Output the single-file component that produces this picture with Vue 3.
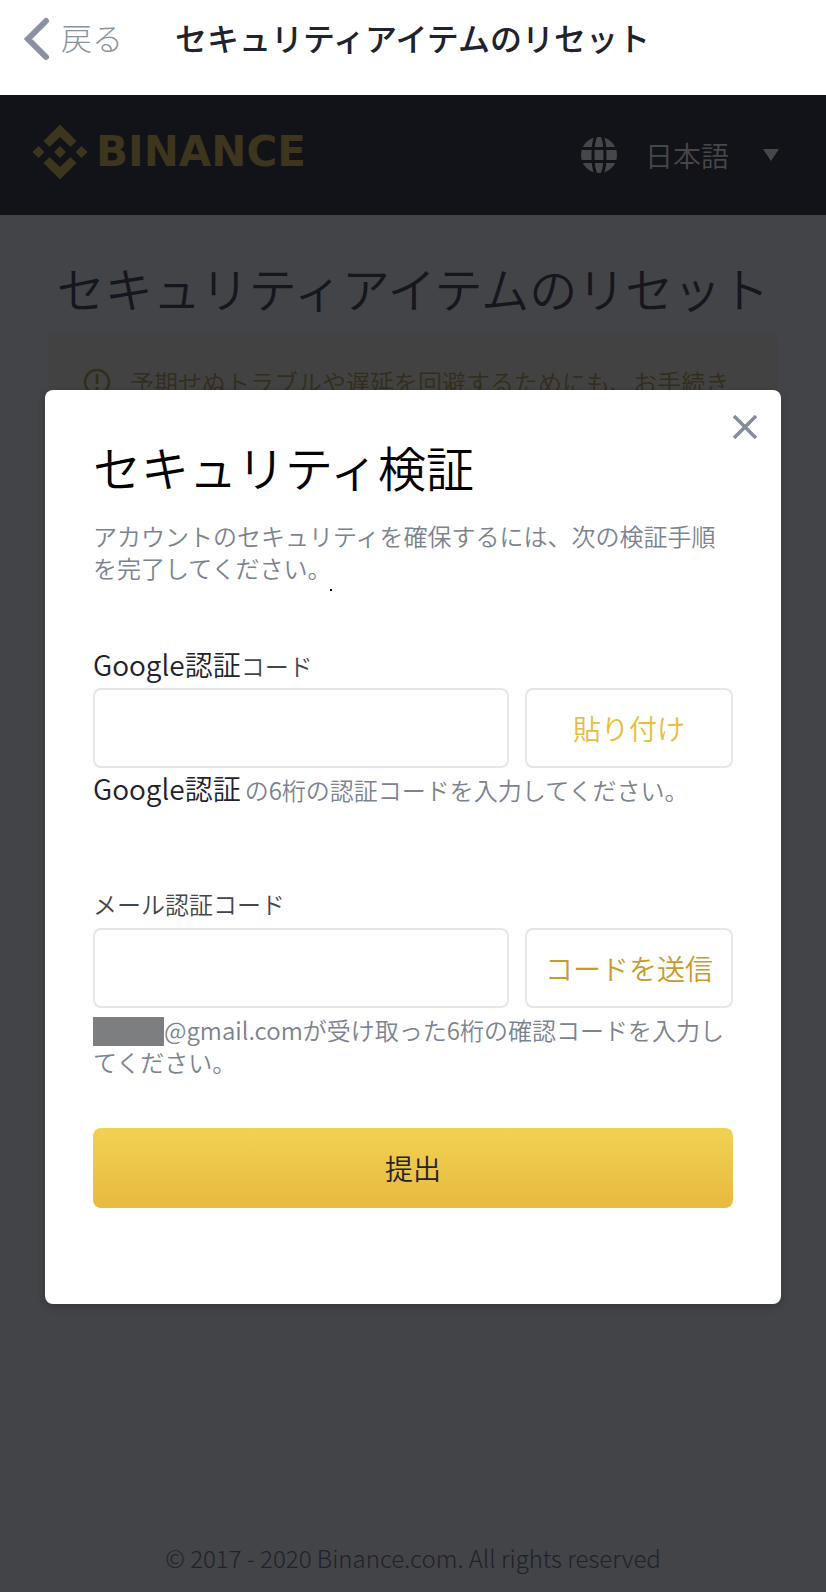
<script setup>
import { ref } from 'vue'

const googleCode = ref('')
const mailCode = ref('')
const title = 'セキュリティアイテムのリセット'
</script>

<template>
  <div class="app">
    <header class="topbar">
      <button class="back" type="button">
        <svg width="26" height="48" viewBox="0 0 26 48" fill="none" aria-hidden="true">
          <path d="M22 8L4 26L22 44" stroke="#8b91a0" stroke-width="6" stroke-linecap="round" stroke-linejoin="miter" />
        </svg>
        <span>戻る</span>
      </button>
      <div class="topbar-title">{{ title }}</div>
    </header>

    <div class="page">
      <nav class="site-nav">
        <a class="brand" href="#">
          <svg width="56" height="56" viewBox="0 0 56 56" fill="#3d351e" aria-hidden="true">
            <path d="M28 .5L44.500 17L38.500 23L28 13L17.500 23L11.500 17Z" />
            <path d="M28 55.500L44.500 39L38.500 33L28 43L17.500 33L11.500 39Z" />
            <path d="M28 22L34 28L28 34L22 28Z" />
            <path d="M6.500 22L12.500 28L6.500 34L.5 28Z" />
            <path d="M49.500 22L55.500 28L49.500 34L43.500 28Z" />
          </svg>
          <span>BINANCE</span>
        </a>
        <button class="lang" type="button">
          <svg width="36" height="36" viewBox="0 0 36 36" aria-hidden="true">
            <circle cx="18" cy="18" r="18" fill="#46474b" />
            <g fill="none" stroke="#121318" stroke-width="3">
              <path d="M0 11.500H36M0 24.500H36" />
              <path d="M15 -1C11 6 11 30 15 37M21 -1C25 6 25 30 21 37" />
            </g>
          </svg>
          <span>日本語</span>
          <svg width="16" height="12" viewBox="0 0 16 12" fill="#46474b" aria-hidden="true">
            <path d="M0 0H16L8 12Z" />
          </svg>
        </button>
      </nav>

      <main class="content">
        <h1>{{ title }}</h1>
        <div class="notice">
          <svg width="28" height="28" viewBox="0 0 28 28" fill="none" stroke="#332d1c" stroke-width="2.500" aria-hidden="true">
            <circle cx="14" cy="14" r="12" />
            <path d="M14 6V16M14 19V22" />
          </svg>
          <span>予期せぬトラブルや遅延を回避するためにも、お手続き</span>
        </div>
      </main>

      <footer>© 2017 - 2020 Binance.com. All rights reserved</footer>

      <section class="modal" role="dialog" aria-labelledby="modal-title">
        <button class="close" type="button" aria-label="閉じる">
          <svg width="24" height="24" viewBox="0 0 24 24" fill="none" stroke="#868c9a" stroke-width="3.500" aria-hidden="true">
            <path d="M1 1L23 23M23 1L1 23" />
          </svg>
        </button>
        <h2 id="modal-title">セキュリティ検証</h2>
        <p class="intro">アカウントのセキュリティを確保するには、次の検証手順を完了してください。</p>
        <div class="speck"></div>

        <form @submit.prevent>
          <label class="label" for="google-code"><strong>Google認証</strong>コード</label>
          <div class="row">
            <input id="google-code" v-model="googleCode" type="text" inputmode="numeric" />
            <button class="side paste" type="button">貼り付け</button>
          </div>
          <p class="hint hint-google"><strong>Google認証</strong>の6桁の認証コードを入力してください。</p>

          <label class="label" for="mail-code">メール認証コード</label>
          <div class="row">
            <input id="mail-code" v-model="mailCode" type="text" inputmode="numeric" />
            <button class="side send" type="button">コードを送信</button>
          </div>
          <p class="hint hint-mail"><span class="mask"></span>@gmail.comが受け取った6桁の確認コードを入力してください。</p>

          <button class="submit" type="submit">提出</button>
        </form>
      </section>
    </div>
  </div>
</template>

<style>
body {
  margin: 0;
}
</style>

<style scoped>
.app {
  display: flex;
  flex-direction: column;
  min-height: 100vh;
  background: #fff;
  font-family: "Noto Sans CJK JP", sans-serif;
  font-weight: 350;
}
.app * {
  box-sizing: border-box;
}
button {
  padding: 0;
  border: 0;
  background: none;
  font: inherit;
  color: inherit;
}
h1,
h2,
p {
  margin: 0;
  font-weight: 350;
}
.topbar {
  display: flex;
  align-items: center;
  height: 95px;
  padding: 0 24px 22px;
}
.back {
  display: flex;
  align-items: center;
  gap: 11px;
  color: #8b91a0;
  font-size: 31px;
  font-weight: 300;
  line-height: 44px;
}
.topbar-title {
  margin-left: 52px;
  color: #20222c;
  font-size: 32px;
  font-weight: 500;
  line-height: 44px;
  white-space: nowrap;
}
.page {
  position: relative;
  display: flex;
  flex: 1;
  flex-direction: column;
  background: #434447;
}
.site-nav {
  display: flex;
  align-items: center;
  justify-content: space-between;
  height: 120px;
  padding: 0 47px 0 32px;
  background: #121318;
}
.brand {
  display: flex;
  align-items: center;
  gap: 8px;
  padding-bottom: 6px;
  color: #3d351e;
  font-family: "DejaVu Sans", sans-serif;
  font-size: 42px;
  font-weight: 700;
  line-height: 58px;
  text-decoration: none;
}
.lang {
  display: flex;
  align-items: center;
  color: #46474b;
  font-size: 28px;
  line-height: 40px;
}
.lang span {
  margin: 0 34px 0 28px;
}
.content {
  flex: 1;
  padding: 36px 48px 0;
}
h1 {
  display: flex;
  justify-content: center;
  color: #15161e;
  font-size: 48px;
  line-height: 72px;
  white-space: nowrap;
}
.notice {
  display: flex;
  align-items: center;
  gap: 19px;
  height: 120px;
  margin-top: 10px;
  padding: 0 35px 22px;
  border-radius: 8px;
  background: #424242;
  color: #332d1c;
  font-size: 24px;
  line-height: 32px;
  white-space: nowrap;
}
footer {
  padding-bottom: 18px;
  color: #20212b;
  font-size: 24px;
  font-weight: 300;
  line-height: 32px;
  text-align: center;
}
.modal {
  position: absolute;
  top: 295px;
  right: 45px;
  left: 45px;
  padding: 40px 48px 96px;
  border-radius: 8px;
  background: #fff;
  box-shadow: 0 3px 8px rgba(0, 0, 0, 0.2);
}
.close {
  position: absolute;
  top: 25px;
  right: 24px;
  display: flex;
}
h2 {
  color: #000;
  font-size: 48px;
  line-height: 72px;
}
.intro {
  margin-top: 18px;
  color: #7b8290;
  font-size: 24px;
  line-height: 32px;
}
.speck {
  width: 2px;
  height: 2px;
  margin: 5px 0 0 237px;
  background: #000;
}
form {
  margin-top: 53px;
}
.label {
  display: flex;
  align-items: baseline;
  height: 44px;
  color: #45464b;
  font-size: 24px;
  line-height: 40px;
}
.hint strong {
  margin-right: 4px;
}
.label strong,
.hint strong {
  color: #20222c;
  font-size: 28px;
  font-weight: 350;
}
.row {
  display: grid;
  grid-template-columns: 2fr 1fr;
  gap: 16px;
}
input {
  min-width: 0;
  height: 80px;
  padding: 0 20px;
  border: 2px solid #e6e6e6;
  border-radius: 8px;
  background: #fff;
  font: inherit;
  font-size: 28px;
}
.side {
  height: 80px;
  border: 2px solid #e6e6e6;
  border-radius: 8px;
  font-size: 28px;
  white-space: nowrap;
}
.paste {
  color: #e9bb3e;
}
.send {
  color: #c99a2c;
}
.hint {
  color: #7b8290;
  font-size: 24px;
  line-height: 32px;
}
.hint-google {
  display: flex;
  align-items: baseline;
  height: 40px;
  margin-bottom: 76px;
  line-height: 40px;
}
.hint-mail {
  margin: 6px 0 50px;
}
.mask {
  display: inline-block;
  width: 71px;
  height: 29px;
  background: #7d7e80;
  vertical-align: -6px;
}
.submit {
  display: block;
  width: 100%;
  height: 80px;
  border-radius: 8px;
  background: linear-gradient(#f1d153, #e8ba3f);
  color: #20222c;
  font-size: 28px;
}
</style>
